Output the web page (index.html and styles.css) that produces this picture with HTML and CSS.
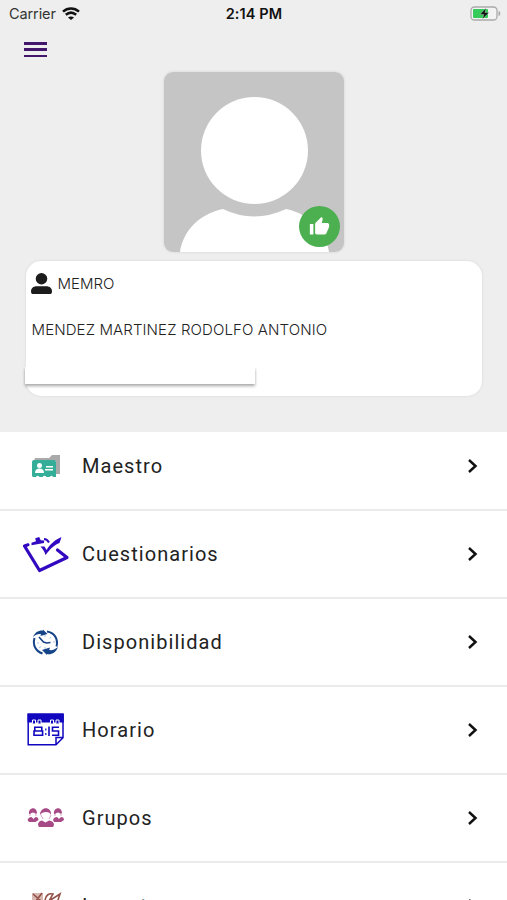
FILE: index.html
```html
<!DOCTYPE html>
<html lang="es">
<head>
  <title>Menú</title>
  <meta charset="utf-8">
  <meta name="viewport" content="width=device-width, initial-scale=1">
  <link rel="stylesheet" href="styles.css">
</head>
<body>
  <header class="profile">
    <div class="status-bar">
      <div class="carrier">
        <span>Carrier</span>
        <svg class="wifi" viewBox="0 0 18 13">
          <path d="M1 4.600C5.700.4 12.300.4 17 4.600M3.800 7.800c3.200-2.700 7.200-2.700 10.400 0" fill="none" stroke="#111" stroke-width="2.500"/>
          <path d="M9 13L6 10.400c1.700-1.300 4.300-1.300 6 0z" fill="#111"/>
        </svg>
      </div>
      <span class="time">2:14 PM</span>
      <svg class="battery" viewBox="0 0 31 15">
        <rect x="1" y="1" width="26" height="13" rx="3.500" fill="#f3f3f3" stroke="#aaa" stroke-width="1.300"/>
        <rect x="3" y="3" width="15" height="9" rx="1" fill="#35cb5b"/>
        <path d="M28.500 5c2.500.5 2.500 4.500 0 5z" fill="#aaa"/>
        <path d="M16 2l-6 6.500h3.800L12.500 13l6.500-6.500h-4z" fill="#111" stroke="#f3f3f3" stroke-width=".3"/>
      </svg>
    </div>
    <button class="menu-button" aria-label="Menú">
      <span></span><span></span><span></span>
    </button>
    <div class="avatar">
      <svg class="avatar-image" viewBox="0 0 180 180">
        <rect width="180" height="180" fill="#c5c5c5"/>
        <circle cx="90.500" cy="78.500" r="53.500" fill="#fff"/>
        <path d="M16 180c3-21 19-38 43-43q31 15 63 0c24 5 40 22 43 43z" fill="#fff"/>
      </svg>
      <div class="badge">
        <svg viewBox="0 0 24 24"><path d="M1 21h4V9H1v12zm22-11c0-1.100-.9-2-2-2h-6.310l.95-4.570.03-.32c0-.41-.17-.79-.44-1.060L14.170 1 7.590 7.590C7.220 7.950 7 8.450 7 9v10c0 1.100.9 2 2 2h9c.83 0 1.540-.5 1.840-1.220l3.020-7.050c.09-.23.14-.47.14-.73v-2z" fill="#fff"/></svg>
      </div>
    </div>
    <section class="card">
      <div class="user">
        <svg class="user-icon" viewBox="0 0 20 20">
          <circle cx="10" cy="5.500" r="5.500"/>
          <path d="M5.500 12.500h9c3.500 0 5.500 2 5.500 5 0 1.500-.8 2.500-2 2.500H2c-1.200 0-2-1-2-2.500 0-3 2-5 5.500-5z"/>
        </svg>
        <span>MEMRO</span>
      </div>
      <p class="name">MENDEZ MARTINEZ RODOLFO ANTONIO</p>
      <div class="strip"></div>
    </section>
  </header>

  <nav class="menu">
    <a class="menu-item" href="#">
      <svg class="icon" viewBox="0 0 50 44">
        <path d="M15 14h14l3-3h8v19h-4V17H14z" fill="#aaa"/>
        <path d="M14 16h19.500q2.500 0 2.500 2v15h-3q-1-2.500-3.500 0h-3q-2-2.500-4 0h-3q-2-2.500-3.500 0H13q-1 0-1-2V18q0-2 2-2z" fill="#34ae98"/>
        <circle cx="19.500" cy="21.500" r="2.500" fill="#fff"/>
        <path d="M15 29q0-4.500 4.500-4.500T24 29zM26 22h7v1.400h-7zM25 25h8v1.500h-8z" fill="#fff"/>
      </svg>
      <span class="label">Maestro</span>
      <svg class="chevron" viewBox="0 0 12 16"><path d="M2 2l6.500 6L2 14"/></svg>
    </a>
    <a class="menu-item" href="#">
      <svg class="icon" viewBox="0 0 50 44">
        <path d="M8 12.800l-3.500 1.200L19.500 38.500l27.500-13L37.500 18" fill="none" stroke="#3208c0" stroke-width="3.200" stroke-linejoin="round" stroke-linecap="round"/>
        <path d="M11.500 13.300v-2.600l4.500-1.500-.8-3 4-1.200 1.500 3.200 3.500.3-.2 2.500z" fill="#3208c0"/>
        <path d="M24 7q3 0 5 3.500" fill="none" stroke="#3208c0" stroke-width="2"/>
        <path d="M20.500 14.500h4l2 3.500c4-6 8-10 15-13l-2 6c-5 2-9 5.500-14 12-1-3.500-2.500-6-5-8.500z" fill="#3208c0"/>
      </svg>
      <span class="label">Cuestionarios</span>
      <svg class="chevron" viewBox="0 0 12 16"><path d="M2 2l6.500 6L2 14"/></svg>
    </a>
    <a class="menu-item" href="#">
      <svg class="icon" viewBox="0 0 50 44">
        <g fill="none" stroke="#164489">
          <path d="M14.500 18c-2 7 1 13 8 15.500" stroke-width="2"/>
          <path d="M27 11.500c7 1 11.500 7 9.500 15" stroke-width="2"/>
          <path d="M19 17l4.500 5 3 1 4-.5" stroke-width="1.600"/>
          <path d="M25 15v2M17 23h2M33 22h2M25 29v-2M19 28l2-1.500M31 17l-1.500 1.500" stroke="#a9c3e6" stroke-width="1"/>
        </g>
        <path d="M13 17c2-5 6-7 10-6.500v-1l4.500 4.500-7 2 .5-2c-3-.5-5.500.5-8 3zM38 27c-2 6-7 8-11 7v1l-5-5 8-2.500-.8 2.500c3.500.5 5.800-.5 8.800-3z" fill="#164489"/>
      </svg>
      <span class="label">Disponibilidad</span>
      <svg class="chevron" viewBox="0 0 12 16"><path d="M2 2l6.500 6L2 14"/></svg>
    </a>
    <a class="menu-item" href="#">
      <svg class="icon" viewBox="0 0 50 44">
        <path d="M8.200 6v30.700H36l7-7V6zM36 36v-6.500H43" fill="#fff" stroke="#1007be" stroke-width="1.500"/>
        <path d="M7.500 6h36.300v8.500H7.500z" fill="#1007be"/>
        <path d="M12.500 15.500V12h3v3.500M18 15.500V12h3v3.500M30.500 15.500V12h3v3.500M36 15.500V12h3v3.500" fill="#1007be" stroke="#fff"/>
        <g fill="none" stroke="#1007be" stroke-width="1.600">
          <path d="M14.800 19.300h7v3.700h-7zM14 23h8.600v4.300H14zM29 18.500V28M39 19.300h-6.500V23H38.500v4.300h-6.500"/>
          <path d="M25.800 20.500v2M25.800 25v2" stroke-width="1.200"/>
        </g>
      </svg>
      <span class="label">Horario</span>
      <svg class="chevron" viewBox="0 0 12 16"><path d="M2 2l6.500 6L2 14"/></svg>
    </a>
    <a class="menu-item" href="#">
      <svg class="icon" viewBox="0 0 50 44">
        <g fill="#a74b87">
          <path d="M9 18c-1-7 8-8 8-1l-1 1q-3-3-6 0zM34 18c-1-7 8-8 8-1l-1 1q-3-3-6 0zM20 19c0-9 12-9 11 0q-1-3-5-3t-6 3z"/>
          <path d="M7.500 24q1-3 4-3l2 2 2-2q3 0 3 3l-3 2H9zM33 24q1-3 4-3l2 2 2-2q3 0 3 3l-3 2h-7zM18 29q0-4 4-4.500l3.500 2 3.500-2q5 .5 5 4.500l-1 2H19z"/>
        </g>
        <path d="M10 18v2M16 18v2M35 18v2M41 18v2M21 19l2 4M31 19l-2 4" stroke="#dda6cc"/>
      </svg>
      <span class="label">Grupos</span>
      <svg class="chevron" viewBox="0 0 12 16"><path d="M2 2l6.500 6L2 14"/></svg>
    </a>
    <a class="menu-item" href="#">
      <svg class="icon" viewBox="0 0 50 44">
        <path d="M12 9h11v24H12z" fill="#d9b9b4"/>
        <path d="M13 10l8 7M22 9l-6 8M25 16c1-5 4-7 8-6l-4 7 11-7-3 9M12 22h24v11H12z" fill="none" stroke="#925047" stroke-width="1.600"/>
      </svg>
      <span class="label">Importar</span>
      <svg class="chevron" viewBox="0 0 12 16"><path d="M2 2l6.500 6L2 14"/></svg>
    </a>
  </nav>
</body>
</html>
```
FILE: styles.css
```css
* {
  box-sizing: border-box;
  margin: 0;
}

body {
  height: 900px;
  overflow: hidden;
  background-color: #FFFFFF;
  color: #222222;
  font-family: "Roboto", sans-serif;
}

.profile {
  height: 432px;
  background-color: #EEEEEE;
}

.status-bar {
  display: grid;
  grid-template-columns: 1fr auto 1fr;
  align-items: center;
  height: 27px;
  padding: 0 6px 0 9px;
  font-family: "Inter", sans-serif;
  font-size: 14.5px;
}

.carrier {
  display: flex;
  align-items: center;
  gap: 6px;
  color: #333333;
}

.carrier span {
  letter-spacing: -0.1px;
}

.wifi {
  width: 18px;
  height: 13px;
}

.time {
  margin-right: 2px;
  font-weight: 600;
  letter-spacing: 0.1px;
  color: #111111;
}

.battery {
  justify-self: end;
  width: 31px;
  height: 15px;
}

.menu-button {
  display: flex;
  flex-direction: column;
  justify-content: space-between;
  width: 23px;
  height: 15px;
  margin: 15px 0 0 24px;
  padding: 0;
  border: 0;
  background: none;
}

.menu-button span {
  height: 2.5px;
  background-color: #42176B;
}

.avatar {
  position: relative;
  width: 180px;
  height: 180px;
  margin: 15px auto 0;
  border-radius: 9px;
  box-shadow: 0 0 3px rgba(0, 0, 0, 0.12);
}

.avatar-image {
  display: block;
  width: 180px;
  height: 180px;
  border-radius: 9px;
}

.badge {
  position: absolute;
  right: 4px;
  bottom: 5px;
  display: flex;
  align-items: center;
  justify-content: center;
  width: 41px;
  height: 41px;
  border-radius: 50%;
  background-color: #4CAF50;
}

.badge svg {
  width: 21px;
  height: 21px;
}

.card {
  width: 456px;
  height: 135px;
  margin: 9px auto 0;
  padding-top: 12px;
  border-radius: 15px;
  background-color: #FFFFFF;
  box-shadow: 0 0 3px rgba(0, 0, 0, 0.1);
  color: #222222;
  font-family: "Inter", sans-serif;
  font-size: 15px;
  font-weight: 350;
}

.user {
  display: flex;
  align-items: center;
  gap: 6px;
  height: 20px;
  padding-left: 5px;
}

.user-icon {
  width: 21px;
  height: 21px;
  overflow: visible;
  fill: #1C1C1C;
}

.name {
  height: 20px;
  margin-top: 27px;
  padding-left: 6px;
  font-size: 15px;
  line-height: 20px;
  letter-spacing: 0.12px;
}

.strip {
  width: 230px;
  height: 17px;
  margin: 27px 0 0 -1px;
  background-color: #FFFFFF;
  box-shadow: 0 2px 3px rgba(0, 0, 0, 0.35);
  clip-path: inset(0 -3px -6px -3px);
}

.menu-item {
  display: flex;
  align-items: center;
  height: 88px;
  padding: 0 28px 0 20px;
  border-bottom: 2px solid #EBEBEB;
  color: inherit;
  text-decoration: none;
}

.menu-item:first-child {
  height: 79px;
  padding-bottom: 9px;
}

.icon {
  flex: none;
  width: 50px;
  height: 44px;
}

.label {
  flex: 1;
  margin-left: 12px;
  font-size: 20px;
  letter-spacing: 1.05px;
}

.chevron {
  width: 12px;
  height: 16px;
  fill: none;
  stroke: #111111;
  stroke-width: 2.5px;
}
```
